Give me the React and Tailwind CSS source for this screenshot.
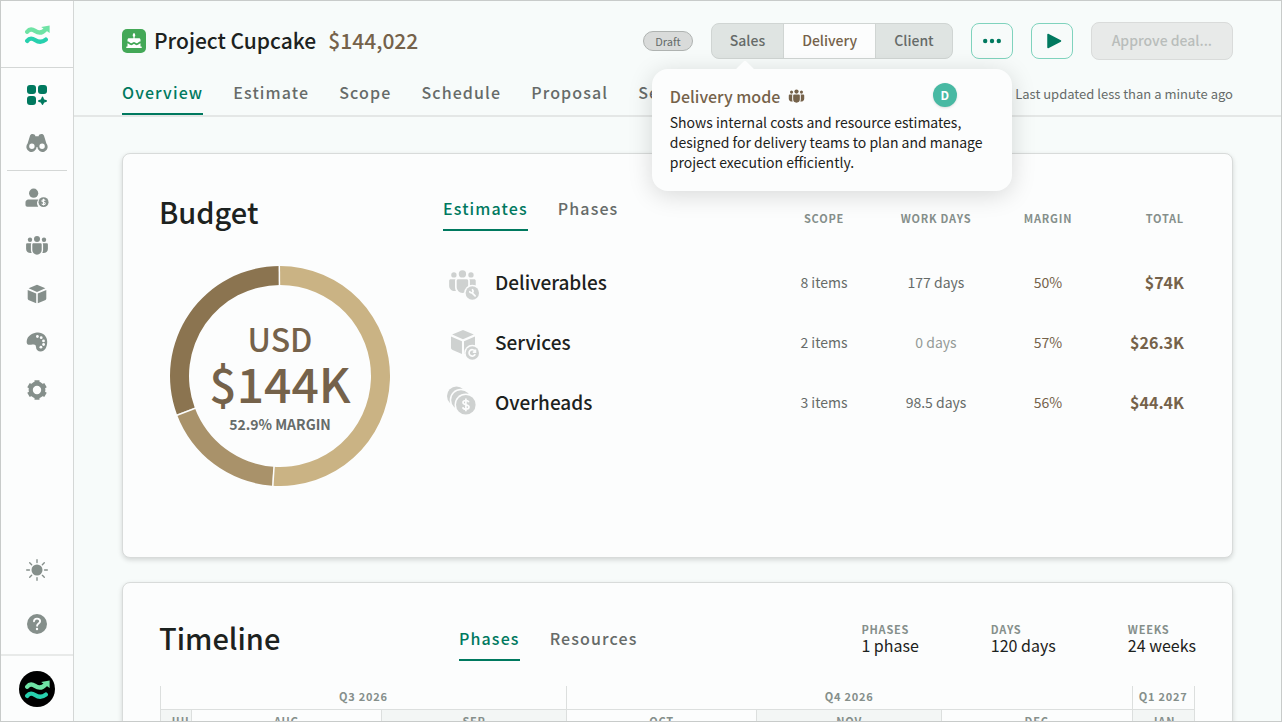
// src/App.jsx
import React, { useState } from "react";
import { BsSunFill } from "react-icons/bs";

const MODES = ["Sales", "Delivery", "Client"];
const PAGES = ["Overview", "Estimate", "Scope", "Schedule", "Proposal", "Settings"];

const QUARTERS = ["Q3 2026", "Q4 2026", "Q1 2027"];
const MONTHS = ["JUL", "AUG", "SEP", "OCT", "NOV", "DEC", "JAN"];

const SLICES = [
  { value: 74, color: "#cab384" },
  { value: 26.3, color: "#a9926a" },
  { value: 44.4, color: "#8b7450" },
];

const STATS = [
  { label: "PHASES", value: "1 phase" },
  { label: "DAYS", value: "120 days" },
  { label: "WEEKS", value: "24 weeks" },
];

function WaveLogo() {
  return (
    <svg viewBox="0 0 26 20" className="mt-0.5 h-5 w-[26px]" fill="none" aria-hidden="true">
      <path
        d="M3.200 6.800C5.500 3.800 8 3.900 11 5.900c3.700 2.500 6.800 2.600 10.300-1.200"
        stroke="#6fe3a5"
        strokeWidth="4.300"
        strokeLinecap="round"
      />
      <path d="M17.200 2 25.600.600V8Z" fill="#6fe3a5" />
      <path
        d="M3.200 15.900c2.300-3 4.800-2.900 7.800-.9 3.700 2.500 7 2.600 10.800-.4"
        stroke="#27d0ae"
        strokeWidth="4.300"
        strokeLinecap="round"
      />
    </svg>
  );
}

function Icon({ children, className = "size-6", box = "0 0 24 24" }) {
  return (
    <svg viewBox={box} fill="currentColor" className={className} aria-hidden="true">
      {children}
    </svg>
  );
}

function AppsIcon() {
  return (
    <Icon>
      <rect x="2" y="2" width="9" height="9" rx="3" />
      <rect x="13" y="2" width="9" height="9" rx="3" />
      <rect x="2" y="13" width="9" height="9" rx="3" />
      <path
        d="M17.500 14.200 18.600 16.900 21.300 18 18.600 19.100 17.500 21.300 16.400 19.100 13.700 18 16.400 16.900Z"
        stroke="currentColor"
        strokeWidth="1.400"
        strokeLinejoin="round"
      />
    </Icon>
  );
}

function BinocularsIcon() {
  return (
    <Icon box="0 1 24 24">
      <path
        fillRule="evenodd"
        d="M7.500 4c1.600 0 2.700.8 2.900 2.300h3.200C13.800 4.800 14.900 4 16.500 4c1.200 0 2.100.6 2.500 1.700l2.400 7.900A5.100 5.100 0 1 1 12.400 17h-.8a5.100 5.100 0 1 1-9-3.400L5 5.700C5.400 4.600 6.300 4 7.500 4ZM6.900 13.500a2.700 2.700 0 1 0 0 5.400 2.700 2.700 0 0 0 0-5.400Zm10.200 0a2.700 2.700 0 1 0 0 5.400 2.700 2.700 0 0 0 0-5.400Z"
      />
    </Icon>
  );
}

function ClientIcon() {
  return (
    <Icon box="0 0 25 24">
      <circle cx="9" cy="7" r="4.800" />
      <path d="M3.500 13.500H14a6.200 6.200 0 0 0-.2 7.500H2.500C1.200 21 .5 20.200.5 19v-2.300c0-1.800 1.200-3.200 3-3.200Z" />
      <circle cx="19.300" cy="16.300" r="5.200" />
      <path
        d="M21 14.800c-.3-.7-.9-1-1.700-1-1 0-1.700.5-1.700 1.200 0 1.700 3.500.8 3.500 2.600 0 .8-.8 1.300-1.800 1.300-.9 0-1.600-.4-1.800-1.100M19.300 12.900v6.900"
        fill="none"
        stroke="#fcfdfd"
        strokeWidth="1.100"
      />
    </Icon>
  );
}

function TeamShape() {
  return (
    <>
      <circle cx="12" cy="5" r="3" />
      <circle cx="5" cy="5.800" r="2.200" />
      <circle cx="19" cy="5.800" r="2.200" />
      <path d="M8.600 9.300h6.800c.8 0 1.300.5 1.300 1.300V16a4.700 4.700 0 0 1-9.400 0v-5.400c0-.8.5-1.300 1.300-1.300Z" />
      <path d="M2.400 9.300h3.900c-.3.400-.4.900-.4 1.400V16c0 1.100.3 2.200.8 3-3 .6-5.600-1.300-5.600-4v-4.400c0-.8.500-1.300 1.300-1.300ZM21.600 9.300h-3.900c.3.400.4.900.4 1.400V16c0 1.100-.3 2.200-.8 3 3 .6 5.600-1.300 5.600-4v-4.400c0-.8-.5-1.300-1.300-1.300Z" />
    </>
  );
}

function TeamIcon({ className }) {
  return (
    <Icon className={className}>
      <TeamShape />
    </Icon>
  );
}

function CubeShape() {
  return (
    <path d="M12 2.800 20.400 6.300 12 9.900 3.600 6.300ZM2.700 7.900l8.500 3.600v9.800l-7.200-3c-.8-.3-1.300-.9-1.300-1.700ZM21.300 7.900l-8.500 3.600v9.800l7.200-3c.8-.3 1.300-.9 1.300-1.700Z" />
  );
}

function PaletteIcon() {
  return (
    <Icon>
      <path d="M10.500 2.800c6.200-1.500 11.700 2.700 11.700 9 0 5.500-2.500 9.700-6.500 9.700-2.800 0-4.600-1.700-4.700-4.500-.1-2-.9-2.700-2.600-2.600-2.300.1-3.600.7-5 .3-1.500-.4-2-2-1.600-4.300.8-4 4.300-6.700 8.700-7.600Z" />
      <g fill="#fcfdfd">
        <circle cx="12.400" cy="6.500" r="1.400" />
        <circle cx="16.200" cy="7.700" r="1.400" />
        <circle cx="18.500" cy="10.900" r="1.400" />
        <circle cx="18.600" cy="14.500" r="1.400" />
        <circle cx="15.900" cy="17.200" r="1.400" />
      </g>
    </Icon>
  );
}

function GearIcon() {
  return (
    <Icon>
      <circle cx="12" cy="12" r="6.300" fill="none" stroke="currentColor" strokeWidth="4.200" />
      <path
        d="M12 2.200v3M12 18.800v3M3.500 7.100l2.600 1.500M17.900 15.400l2.600 1.500M3.500 16.900l2.600-1.500M17.900 8.600l2.600-1.500"
        stroke="currentColor"
        strokeWidth="5"
        strokeLinejoin="round"
      />
    </Icon>
  );
}

function HelpIcon() {
  return (
    <Icon>
      <circle cx="12" cy="12" r="10" />
      <path
        d="M9 9.300c.1-1.700 1.300-2.700 3-2.700 1.800 0 3.100 1 3.100 2.600 0 2.300-3 2.300-3 4.600"
        fill="none"
        stroke="#fcfdfd"
        strokeWidth="1.900"
        strokeLinecap="round"
      />
      <circle cx="12" cy="17" r="1.200" fill="#fcfdfd" />
    </Icon>
  );
}

function CakeIcon() {
  return (
    <Icon className="size-6 rounded-[5px] bg-[#43a857] text-white">
      <path d="M12 3.800c1 1.200 1.300 2 1.300 2.700 0 .6-.3 1-.7 1.200v1.600h4.200c1.200 0 1.700.6 1.700 1.700v1.600c-1.100 0-1.600.4-2.200 1-1.100 1-2 1-3.100 0-.8-.8-1.600-.8-2.400 0-1.100 1-2 1-3.100 0-.6-.6-1.100-1-2.200-1V11c0-1.100.5-1.700 1.700-1.700h4.200V7.700c-.4-.2-.7-.6-.7-1.200 0-.7.300-1.500 1.300-2.700Z" />
      <path d="M5.500 14.200c.5 0 .8.300 1.300.8 1.600 1.500 3.400 1.500 4.900.1.200-.2.400-.2.600 0 1.500 1.400 3.300 1.400 4.900-.1.500-.5.800-.8 1.300-.8v3.300h.7c.4 0 .7.300.7.700s-.3.700-.7.700H4.800c-.4 0-.7-.3-.7-.7s.3-.7.700-.7h.7Z" />
    </Icon>
  );
}

// Row icons are drawn on a 32px box with a small badge in the lower right corner
function DeliverablesIcon() {
  return (
    <Icon className="size-8" box="0 0 32 32">
      <g transform="translate(.8 -.2) scale(1.22)">
        <TeamShape />
      </g>
      <circle cx="25.300" cy="25" r="8.200" fill="#fcfdfd" />
      <circle cx="25.300" cy="25" r="6.700" />
      <path
        d="m25.100 24.900 3 3M22.800 23.800a1.900 1.900 0 0 0 2.600.8 1.900 1.900 0 0 0 .1-2.800"
        fill="none"
        stroke="#fcfdfd"
        strokeWidth="1.800"
        strokeLinecap="round"
      />
    </Icon>
  );
}

function ServicesIcon() {
  return (
    <Icon className="size-8" box="0 0 32 32">
      <g transform="translate(.5 -1.600) scale(1.29)">
        <CubeShape />
      </g>
      <circle cx="25.300" cy="25" r="8.200" fill="#fcfdfd" />
      <circle cx="25.300" cy="25" r="6.700" />
      <path
        d="M27.900 23.100a3.200 3.200 0 1 0 .3 3.100M28.400 21.600v2.600h-2.600"
        fill="none"
        stroke="#fcfdfd"
        strokeWidth="1.700"
      />
    </Icon>
  );
}

function OverheadsIcon() {
  return (
    <Icon className="size-8 overflow-visible" box="0 2 32 32">
      <circle cx="9.500" cy="10" r="9.500" />
      <circle cx="14" cy="14" r="11.300" fill="#fcfdfd" />
      <circle cx="14" cy="14" r="9.800" />
      <circle cx="18.800" cy="18.800" r="11.300" fill="#fcfdfd" />
      <circle cx="18.800" cy="18.800" r="9.800" />
      <path
        d="M21.800 16.300c-.4-1.200-1.500-1.800-2.900-1.800-1.700 0-2.900.8-2.900 2 0 2.900 6 1.500 6 4.500 0 1.300-1.300 2.200-3.100 2.200-1.600 0-2.800-.7-3.200-2M18.900 12.600v12.600"
        fill="none"
        stroke="#fcfdfd"
        strokeWidth="1.700"
      />
    </Icon>
  );
}

const ROWS = [
  { name: "Deliverables", icon: DeliverablesIcon, scope: "8 items", days: "177 days", margin: "50%", total: "$74K" },
  { name: "Services", icon: ServicesIcon, scope: "2 items", days: "0 days", margin: "57%", total: "$26.3K", idle: true },
  { name: "Overheads", icon: OverheadsIcon, scope: "3 items", days: "98.5 days", margin: "56%", total: "$44.4K" },
];

function SideButton({ label, active, children }) {
  return (
    <button
      aria-label={label}
      className={`flex size-12 items-center justify-center ${active ? "text-[#00795f]" : "text-[#858f8b]"}`}
    >
      {children}
    </button>
  );
}

function Sidebar() {
  return (
    <aside className="flex w-[73px] shrink-0 flex-col items-center border-r border-[#d4d7d6] bg-[#fcfdfd]">
      <a href="#home" aria-label="Home" className="flex h-[67px] w-full items-center justify-center border-b border-[#d4d7d6]">
        <WaveLogo />
      </a>
      <nav className="flex flex-col items-center pt-[3px]">
        <SideButton label="Projects" active>
          <AppsIcon />
        </SideButton>
        <SideButton label="Explore">
          <BinocularsIcon />
        </SideButton>
        <hr className="my-[3px] w-[60px] border-[#d4d7d6]" />
        <SideButton label="Clients">
          <ClientIcon />
        </SideButton>
        <SideButton label="Team">
          <TeamIcon />
        </SideButton>
        <SideButton label="Products">
          <Icon>
            <CubeShape />
          </Icon>
        </SideButton>
        <SideButton label="Branding">
          <PaletteIcon />
        </SideButton>
        <SideButton label="Settings">
          <GearIcon />
        </SideButton>
      </nav>
      <div className="mt-auto flex flex-col gap-1.5 pb-1.5">
        <SideButton label="Theme">
          <BsSunFill className="size-[22px]" />
        </SideButton>
        <SideButton label="Help">
          <HelpIcon />
        </SideButton>
      </div>
      <div className="flex h-[67px] w-full items-center justify-center border-t-2 border-[#e8eae9]">
        <button aria-label="Account" className="flex size-9 items-center justify-center rounded-full bg-black">
          <WaveLogo />
        </button>
      </div>
    </aside>
  );
}

function Tabs({ items, active, onSelect }) {
  return (
    <div role="tablist" className="flex gap-[30px]">
      {items.map((item) => (
        <button
          key={item}
          role="tab"
          aria-selected={item === active}
          onClick={() => onSelect(item)}
          className={`h-10 border-b-2 pb-1 text-base font-medium tracking-[0.07em] ${
            item === active ? "border-[#00795f] text-[#00795f]" : "border-transparent text-[#666b69]"
          }`}
        >
          {item}
        </button>
      ))}
    </div>
  );
}

function ModePopover() {
  return (
    <div
      role="tooltip"
      className="absolute top-[46px] -left-[59px] z-10 w-[360px] rounded-2xl bg-[#fcfdfd] px-[18px] pt-[15px] pb-[19px] shadow-[0_4px_24px_rgba(0,0,0,0.15)]"
    >
      <div className="absolute -top-[6px] left-[86px] size-[14px] rotate-45 rounded-[2px] bg-[#fcfdfd]" />
      <div className="flex items-center gap-2 text-base leading-6 font-medium text-[#75624a]">
        Delivery mode
        <TeamIcon className="size-[17px]" />
      </div>
      <p className="mt-1 text-sm leading-5 text-[#1c2220]">
        Shows internal costs and resource estimates, designed for delivery teams to plan and manage project execution
        efficiently.
      </p>
      <span className="absolute top-[14px] right-[55px] flex size-6 items-center justify-center rounded-full bg-[#48b9a3] text-xs font-bold text-white shadow">
        D
      </span>
    </div>
  );
}

function Header() {
  const [mode, setMode] = useState("Delivery");
  const [page, setPage] = useState("Overview");

  return (
    <header className="border-b-2 border-[#e4e7e6] px-12">
      <div className="flex h-20 items-center">
        <CakeIcon />
        <div className="ml-2 flex gap-3 text-[21px] font-medium">
          <h1 className="text-[#1c2220]">Project Cupcake</h1>
          <span className="text-[#75624a]">$144,022</span>
        </div>

        <div className="ml-auto flex items-center gap-[18px]">
          <span className="flex h-5 items-center rounded-full border border-[#afb3b1] bg-[#d9dbda] px-[11px] text-[11px] text-[#666b69]">
            Draft
          </span>
          <div className="relative">
            <div className="flex h-9 overflow-hidden rounded-lg border border-[#d0d5d3] bg-[#dfe4e2]">
              {MODES.map((m) => (
                <button
                  key={m}
                  onClick={() => setMode(m)}
                  className={`px-[18px] pb-0.5 text-sm font-medium ${
                    m === mode ? "border-x border-[#d0d5d3] bg-[#fcfdfd] text-[#75624a]" : "text-[#666b69]"
                  }`}
                >
                  {m}
                </button>
              ))}
            </div>
            <ModePopover />
          </div>
          <button
            aria-label="More"
            className="flex h-9 w-[42px] items-center justify-center rounded-lg border border-[#7fd3bd] text-[#00795f]"
          >
            <Icon className="h-2 w-5" box="0 0 20 8">
              <circle cx="3.200" cy="4" r="2.200" />
              <circle cx="10" cy="4" r="2.200" />
              <circle cx="16.800" cy="4" r="2.200" />
            </Icon>
          </button>
          <button
            aria-label="Present"
            className="flex h-9 w-[42px] items-center justify-center rounded-lg border border-[#7fd3bd] text-[#00795f]"
          >
            <Icon className="ml-1 size-4" box="0 0 16 16">
              <path d="M2 1.500 14.500 8 2 14.500Z" stroke="currentColor" strokeWidth="1.500" strokeLinejoin="round" />
            </Icon>
          </button>
          <button
            disabled
            className="h-[38px] rounded-lg border border-[#d9dbda] bg-[#e8eae9] px-5 pb-0.5 text-sm font-medium text-[#b9bdbb]"
          >
            Approve deal...
          </button>
        </div>
      </div>
      <div className="-mt-[6px] flex items-center justify-between">
        <Tabs items={PAGES} active={page} onSelect={setPage} />
        <span className="pb-0.5 text-[13px] text-[#666b69]">Last updated less than a minute ago</span>
      </div>
    </header>
  );
}

function Donut() {
  const total = SLICES.reduce((sum, s) => sum + s.value, 0);
  const point = (share, r) => {
    const a = share * 2 * Math.PI;
    return `${110 + r * Math.sin(a)} ${110 - r * Math.cos(a)}`;
  };
  let start = 0;
  const arcs = SLICES.map((s) => {
    const end = start + s.value / total;
    const large = end - start > 0.5 ? 1 : 0;
    const d = `M${point(start, 110)}A110 110 0 ${large} 1 ${point(end, 110)}L${point(end, 91)}A91 91 0 ${large} 0 ${point(start, 91)}Z`;
    const gap = `M${point(end - 0.001, 90)}L${point(end - 0.001, 111)}`;
    start = end;
    return { d, gap, color: s.color };
  });

  return (
    <div className="relative size-[220px]">
      <svg viewBox="0 0 220 220" className="size-full" role="img" aria-label="Budget split">
        {arcs.map((a) => (
          <path key={a.color} d={a.d} fill={a.color} />
        ))}
        {arcs.map((a) => (
          <path key={a.color} d={a.gap} stroke="#fcfdfd" strokeWidth="1.500" />
        ))}
      </svg>
      <div className="absolute inset-0 flex flex-col items-center justify-center text-[#75624a]">
        <span className="text-[32px] leading-10 font-medium">USD</span>
        <span className="text-5xl leading-12 font-medium">$144K</span>
        <span className="mt-2 text-sm leading-5 font-bold text-[#666b69]">52.9% MARGIN</span>
      </div>
    </div>
  );
}

function BudgetCard() {
  const [tab, setTab] = useState("Estimates");

  return (
    <section className="flex min-h-[405px] rounded-lg border border-[#d8dbda] bg-[#fcfdfd] px-9 pt-9 shadow-[0_2px_5px_rgba(0,0,0,0.15)]">
      <div className="w-[284px] shrink-0">
        <h2 className="text-[29px] leading-[42px] font-medium text-[#1c2220]">Budget</h2>
        <div className="mt-[34px] ml-[11px]">
          <Donut />
        </div>
      </div>
      <table className="h-fit w-full table-fixed text-center text-sm">
        <thead>
          <tr className="h-[62px] align-top text-[11px] font-bold tracking-[0.07em] text-[#858f8b]">
            <th className="pt-px text-left">
              <Tabs items={["Estimates", "Phases"]} active={tab} onSelect={setTab} />
            </th>
            <th className="w-28 pt-[21px]">SCOPE</th>
            <th className="w-28 pt-[21px]">WORK DAYS</th>
            <th className="w-28 pt-[21px]">MARGIN</th>
            <th className="w-[92px] pt-[21px] pr-3 text-right">TOTAL</th>
          </tr>
        </thead>
        <tbody>
          {ROWS.map((row) => (
            <tr key={row.name} className="h-[60px]">
              <th className="text-left font-medium">
                <div className="flex items-center gap-4 pl-1 text-[19px] leading-8 text-[#1c2220]">
                  <span className="mt-1 text-[#ced1d0]">
                    <row.icon />
                  </span>
                  {row.name}
                </div>
              </th>
              <td className="text-[#666b69]">{row.scope}</td>
              <td className={row.idle ? "text-[#949a97]" : "text-[#666b69]"}>{row.days}</td>
              <td className="text-[#75624a]">{row.margin}</td>
              <td className="pr-3 text-right text-base font-bold text-[#75624a]">{row.total}</td>
            </tr>
          ))}
        </tbody>
      </table>
    </section>
  );
}

function TimelineCard() {
  const [tab, setTab] = useState("Phases");

  return (
    <section className="rounded-lg border border-[#d8dbda] bg-[#fcfdfd] px-9 pt-[33px] pb-9 shadow-[0_2px_5px_rgba(0,0,0,0.15)]">
      <div className="flex items-start">
        <h2 className="w-[300px] shrink-0 text-[29px] leading-[42px] font-medium text-[#1c2220]">Timeline</h2>
        <div className="mt-[5px]">
          <Tabs items={["Phases", "Resources"]} active={tab} onSelect={setTab} />
        </div>
        <dl className="mt-1.5 ml-auto flex gap-[72px]">
          {STATS.map((s) => (
            <div key={s.label}>
              <dt className="text-[11px] leading-3.5 font-bold tracking-[0.07em] text-[#858f8b]">{s.label}</dt>
              <dd className="text-base leading-[18px] text-[#1c2220]">{s.value}</dd>
            </div>
          ))}
        </dl>
      </div>

      <div className="mx-px mt-[25px] border-x border-[#dcdfde] text-center text-[11px] font-bold tracking-[0.07em] text-[#858f8b]">
        {/* tracks are sized by the number of days each one covers */}
        <div className="grid h-6 grid-cols-[66fr_92fr_10fr] divide-x divide-[#dcdfde] border-b border-[#dcdfde] leading-5">
          {QUARTERS.map((q) => (
            <div key={q} className="min-w-0 whitespace-nowrap">
              {q}
            </div>
          ))}
        </div>
        <div className="grid h-6 grid-cols-[5fr_31fr_30fr_31fr_30fr_31fr_10fr] divide-x divide-[#dcdfde] leading-[22px]">
          {MONTHS.map((m) => (
            <div key={m} className="min-w-0 overflow-hidden px-2 odd:bg-[#f3f6f5]">
              {m}
            </div>
          ))}
        </div>
      </div>
    </section>
  );
}

export default function App() {
  return (
    <div className="flex h-screen overflow-hidden border border-[#c8cbca] bg-[#f7fbfa] font-['Noto_Sans_CJK_SC','Noto_Sans',sans-serif]">
      <Sidebar />
      <div className="flex min-w-0 flex-1 flex-col">
        <Header />
        <main className="flex min-h-0 flex-1 flex-col gap-6 overflow-hidden px-12 pt-9 *:shrink-0">
          <BudgetCard />
          <TimelineCard />
        </main>
      </div>
    </div>
  );
}
